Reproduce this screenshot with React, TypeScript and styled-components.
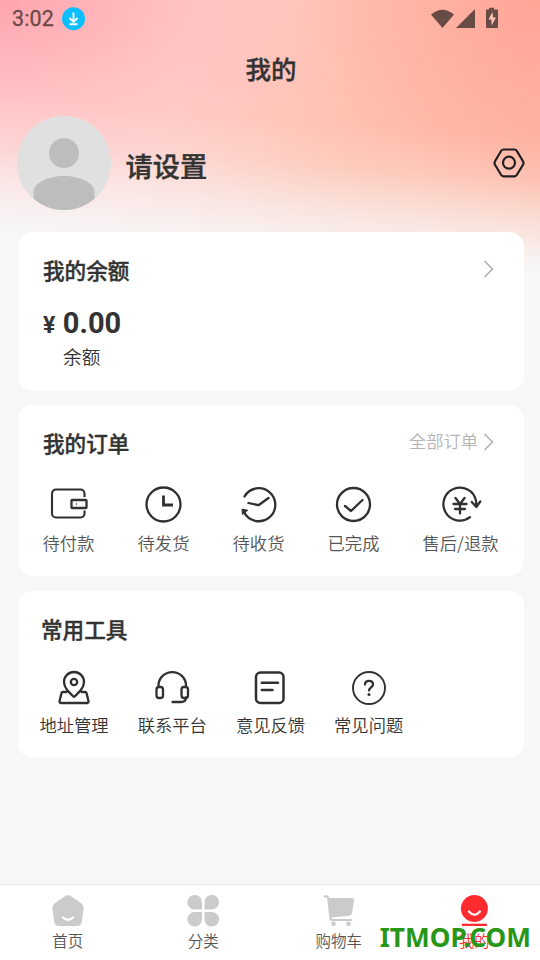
import React from 'react';
import styled, { createGlobalStyle } from 'styled-components';

const GlobalStyle = createGlobalStyle`
  * { box-sizing: border-box; }
  body {
    margin: 0;
    background: #f7f7f7;
    font-family: "Noto Sans CJK SC", sans-serif;
    color: #333;
  }
`;

const Screen = styled.div`
  display: flex;
  flex-direction: column;
  width: 540px;
  height: 960px;
  overflow: hidden;
  background:
    linear-gradient(184deg, rgba(247, 247, 247, 0) 135px, rgba(247, 247, 247, 0.2) 180px, rgba(247, 247, 247, 0.65) 225px, #f7f7f7 270px),
    radial-gradient(ellipse 360px 190px at 0 0, rgba(255, 160, 172, 0.9), rgba(255, 180, 186, 0.4) 55%, rgba(255, 190, 190, 0) 100%),
    radial-gradient(ellipse 240px 200px at 100% 0, rgba(255, 155, 142, 0.65), rgba(255, 165, 150, 0) 100%),
    linear-gradient(103deg, #ffd0d0 0, #ffcfc9 190px, #ffc1b0 370px, #ffb5a1 600px);
`;

const StatusBar = styled.header`
  display: flex;
  justify-content: space-between;
  align-items: center;
  flex: none;
  height: 37px;
  padding: 0 41px 0 12px;
`;

const StatusGroup = styled.div<{ $gap: number }>`
  display: flex;
  align-items: center;
  gap: ${(p) => p.$gap}px;
`;

const Clock = styled.span`
  font: 400 21.5px/37px Roboto, sans-serif;
  letter-spacing: 0.1px;
  color: #6b4a48;
  -webkit-text-stroke: 0.3px #6b4a48;
`;

const Title = styled.h1`
  flex: none;
  height: 64px;
  margin: 0;
  padding-left: 2px;
  text-align: center;
  font-size: 25.5px;
  font-weight: 500;
  line-height: 62px;
  -webkit-text-stroke: 0.35px #333;
`;

const Profile = styled.section`
  display: flex;
  flex: none;
  align-items: center;
  height: 131px;
  padding: 0 15px 7px 17px;
`;

const UserName = styled.div`
  flex: 1;
  margin-left: 14.500px;
  padding-top: 3px;
  font-size: 27.2px;
  font-weight: 500;
  line-height: 36px;
  -webkit-text-stroke: 0.4px #333;
`;

const Card = styled.section<{ $height: number; $gap: number }>`
  flex: none;
  height: ${(p) => p.$height}px;
  margin: 0 16px ${(p) => p.$gap}px 18px;
  border-radius: 15px;
  background: #fff;
`;

const CardHead = styled.div<{ $left: number }>`
  display: flex;
  align-items: center;
  justify-content: space-between;
  height: 76px;
  padding: 0 30px 0 ${(p) => p.$left}px;
`;

const CardTitle = styled.h2`
  margin: 0;
  padding-bottom: 1px;
  font-size: 21.6px;
  font-weight: 500;
  line-height: 30px;
  -webkit-text-stroke: 0.4px #333;
`;

const More = styled.div`
  display: flex;
  align-items: center;
  gap: 5px;
  padding-bottom: 3px;
  color: #b4b4b4;
  font-size: 17.3px;
  font-weight: 350;
  line-height: 24px;
`;

const MoreText = styled.span`
  padding-bottom: 1px;
`;

const Amount = styled.div`
  display: flex;
  align-items: baseline;
  gap: 7.500px;
  height: 35px;
  padding-left: 25px;
  font: 700 29px/30px Roboto, sans-serif;
`;

const Currency = styled.span`
  font-size: 23px;
`;

const AmountLabel = styled.div`
  padding-left: 45px;
  font-size: 18.7px;
  font-weight: 350;
  line-height: 26px;
`;

const Grid = styled.div<{ $columns: string; $left: number; $color: string }>`
  display: grid;
  grid-template-columns: ${(p) => p.$columns};
  padding-left: ${(p) => p.$left}px;
  color: ${(p) => p.$color};
`;

const Entry = styled.div<{ $top: number; $gap: number }>`
  display: flex;
  flex-direction: column;
  align-items: center;
  gap: ${(p) => p.$gap}px;
  padding-top: ${(p) => p.$top}px;
  font-size: 17.3px;
  font-weight: 350;
  line-height: 26px;
  white-space: nowrap;
`;

const EntryIcon = styled.svg`
  display: block;
  width: 42px;
  height: 42px;
  fill: none;
  stroke: #303030;
  stroke-width: 2.3;
  stroke-linecap: round;
  stroke-linejoin: round;
`;

const Spacer = styled.div`
  flex: 1;
`;

const TabBar = styled.nav`
  position: relative;
  display: grid;
  grid-template-columns: repeat(4, 135.500px);
  flex: none;
  height: 76px;
  border-top: 1px solid #e6e6e6;
  background: #fff;
`;

const Tab = styled.div<{ $active?: boolean }>`
  display: flex;
  flex-direction: column;
  align-items: center;
  padding-top: 8px;
  color: ${(p) => (p.$active ? '#ff2c2f' : '#555')};
  font-size: 15.5px;
  font-weight: 350;
  line-height: 22px;
`;

const TabIcon = styled.svg`
  display: block;
  width: 36px;
  height: 36px;
`;

const Watermark = styled.div`
  position: absolute;
  right: 9px;
  top: 34px;
  color: #289617;
  font: 700 26.2px/36px "Noto Sans", sans-serif;
  white-space: nowrap;
`;

const Chevron = () => (
  <svg width="11" height="18" viewBox="0 0 11 18" fill="none" stroke="#adadad" strokeWidth="1.5">
    <path d="M1.5 1 9.5 9 1.5 17" />
  </svg>
);

const orders = [
  {
    label: '待付款',
    icon: (
      <>
        <path d="M36.5 14V10.5a4 4 0 0 0-4-4H8a4 4 0 0 0-4 4v20a4 4 0 0 0 4 4h24.5a4 4 0 0 0 4-4V27.500" strokeWidth="2.1" strokeLinecap="butt" />
        <rect x="23.5" y="17" width="15" height="8" rx="0.8" />
        <circle cx="28.5" cy="21" r=".8" fill="#303030" stroke="none" />
      </>
    ),
  },
  {
    label: '待发货',
    icon: (
      <>
        <circle cx="20.5" cy="21.5" r="17" />
        <path d="M20.5 12.500v9.500h9.500" strokeLinecap="butt" strokeLinejoin="miter" strokeWidth="2.8" />
      </>
    ),
  },
  {
    label: '待收货',
    icon: (
      <>
        <path d="M6.500 13.500A16.5 16.5 0 1 1 6 29" />
        <path d="m10.5 20 10 2.200L30.500 15" />
        <path d="m4 26.500.5 5 5-4Z" fill="#303030" strokeWidth="1" />
      </>
    ),
  },
  {
    label: '已完成',
    icon: (
      <>
        <circle cx="20.5" cy="21.5" r="16.5" />
        <path d="m12 23 6 5L29.500 17" />
      </>
    ),
  },
  {
    label: '售后/退款',
    icon: (
      <>
        <path d="M30 34.200A16.500 16.500 0 1 1 36 17.500l.3 5.500M31.800 19l4.500 5 4-5.500" />
        <path d="m15.500 15 4.500 6 4.500-6M13.500 21h13M15 26h10M20 21v9.500" />
      </>
    ),
  },
];

const tools = [
  {
    label: '地址管理',
    icon: (
      <>
        <path d="M21 30c-5-4.500-10-9-10-15a10 10 0 0 1 20 0c0 6-5 10.500-10 15Z" />
        <circle cx="21" cy="15" r="3.2" />
        <path d="M13.500 25H10a1.500 1.500 0 0 0-1.500 1L6.500 34.300a1.500 1.500 0 0 0 1.500 1.700h26a1.500 1.500 0 0 0 1.500-1.700L33.500 26a1.500 1.500 0 0 0-1.500-1H28.500" />
      </>
    ),
  },
  {
    label: '联系平台',
    icon: (
      <>
        <path d="M7.500 20v-2.500a13.800 13.500 0 0 1 27.500 0V20M35 30.500c0 3-2 4.500-5 4.500H21.500" />
        <rect x="5.500" y="20" width="6.500" height="11" rx="2.500" />
        <rect x="30.500" y="20" width="6.500" height="11" rx="2.500" />
      </>
    ),
  },
  {
    label: '意见反馈',
    icon: (
      <>
        <rect x="7" y="5.500" width="27.500" height="30.500" rx="4.500" strokeWidth="2.500" />
        <path d="M12.800 15.800H29M12.800 22.900H23.500" strokeWidth="2.500" />
      </>
    ),
  },
  {
    label: '常见问题',
    icon: (
      <>
        <circle cx="21" cy="21" r="16" strokeWidth="1.9" />
        <path d="M17 17.500c0-5 8-4.500 8 0 0 2.800-4 3-4 6" />
        <circle cx="21" cy="27.500" r="1.500" fill="#303030" stroke="none" />
      </>
    ),
  },
];

const tabs = [
  {
    label: '首页',
    icon: (
      <>
        <path d="M14.500 3.500q3.500-2.500 7 0l9.500 6.500q3 2 2.500 6l-1.500 12q-.700 5-5.500 5H9.500Q4.700 33 4 28L2.500 16q-.500-4 2.500-6Z" fill="#cbcbcb" />
        <path d="M13 24.500q5 4.500 10 0" stroke="#fff" strokeWidth="2.200" fill="none" strokeLinecap="round" />
      </>
    ),
  },
  {
    label: '分类',
    icon: (
      <g fill="#cbcbcb">
        <path d="M17 16.500H9.500a7.300 7.300 0 1 1 7.500-7.200Z" />
        <path d="M19.500 16.500V9.300a7.300 7.300 0 1 1 7.300 7.200Z" />
        <path d="M17 19v7.200A7.300 7.300 0 1 1 9.500 19Z" />
        <path d="M19.500 19h7.300a7.300 7.300 0 1 1-7.300 7.200Z" />
      </g>
    ),
  },
  {
    label: '购物车',
    icon: (
      <>
        <path d="M7 5h23.500q3 0 2.500 3L31 20q-.400 2.500-3 2.800L10 24.500Z" fill="#cbcbcb" />
        <path d="M3.500 3.300h1.500q2 0 2.300 2L9.500 25q.300 2 2.500 2H30.500" fill="none" stroke="#cbcbcb" strokeWidth="2.200" strokeLinecap="round" />
        <circle cx="12.500" cy="30.800" r="2.300" fill="#cbcbcb" />
        <circle cx="27.500" cy="30.800" r="2.300" fill="#cbcbcb" />
      </>
    ),
  },
  {
    label: '我的',
    active: true,
    icon: (
      <>
        <circle cx="18.400" cy="15.500" r="13.500" fill="#ff2c2f" />
        <path d="M12.900 18.500q5.500 6.500 11 0" stroke="#fff" strokeWidth="2.200" fill="none" strokeLinecap="round" />
        <rect x="5.900" y="30.700" width="25" height="2.300" fill="#ff2c2f" />
      </>
    ),
  },
];

export default function App() {
  return (
    <>
      <GlobalStyle />
      <Screen>
        <StatusBar>
          <StatusGroup $gap={8}>
            <Clock>3:02</Clock>
            <svg width="24" height="24" viewBox="0 0 24 24">
              <circle cx="11.500" cy="11.700" r="11.500" fill="#0abeff" />
              <path d="M11.500 5.500v9M7.500 11l4 4 4-4M7.500 17.300h8" stroke="#fff" strokeWidth="1.900" fill="none" />
            </svg>
          </StatusGroup>
          <StatusGroup $gap={0}>
            <svg width="69" height="24" viewBox="0 0 69 24" fill="#694b45">
              <path d="M1 7.500Q12.500-2 24 7.500L12.500 21Z" />
              <path d="M26 21 45 2v19Z" />
              <path d="M56 2.500h3V.800h5v1.700h3q1 0 1 1V20q0 1-1 1H57q-1 0-1-1Z" />
              <path d="M62.500 5 58.500 12.500h3v6l4.500-8h-3Z" fill="#ffc5b6" />
            </svg>
          </StatusGroup>
        </StatusBar>
        <Title>我的</Title>
        <Profile>
          <svg width="94" height="94" viewBox="0 0 94 94">
            <defs>
              <clipPath id="avatar"><circle cx="47" cy="47" r="47" /></clipPath>
            </defs>
            <g clipPath="url(#avatar)">
              <rect width="94" height="94" fill="#e0e0e0" />
              <circle cx="47" cy="37" r="15" fill="#bdbdbd" />
              <path d="M16.500 94V76c0-9 14.500-16 30.500-16s30.500 7 30.500 16v18Z" fill="#bdbdbd" />
            </g>
          </svg>
          <UserName>请设置</UserName>
          <svg width="32" height="30" viewBox="0 0 32 30" fill="none" stroke="#202020" strokeWidth="2.200" strokeLinejoin="round">
            <path d="M10.500 1.500h11q1.500 0 2.300 1.300l6.200 10.500q1 1.700 0 3.400L23.800 27q-.800 1.300-2.300 1.300h-11Q9 28.300 8.200 27L2 16.700q-1-1.700 0-3.400L8.200 2.800Q9 1.500 10.500 1.500Z" />
            <circle cx="16" cy="14.700" r="6" />
          </svg>
        </Profile>
        <Card $height={159} $gap={14}>
          <CardHead $left={25}>
            <CardTitle>我的余额</CardTitle>
            <More><Chevron /></More>
          </CardHead>
          <Amount><Currency>¥</Currency>0.00</Amount>
          <AmountLabel>余额</AmountLabel>
        </Card>
        <Card $height={171} $gap={15}>
          <CardHead $left={25}>
            <CardTitle>我的订单</CardTitle>
            <More><MoreText>全部订单</MoreText><Chevron /></More>
          </CardHead>
          <Grid $columns="95px 95px 95px 95px 119px" $left={3} $color="#555">
            {orders.map((o) => (
              <Entry key={o.label} $top={2} $gap={5}>
                <EntryIcon viewBox="0 0 42 42">{o.icon}</EntryIcon>
                {o.label}
              </Entry>
            ))}
          </Grid>
        </Card>
        <Card $height={167} $gap={0}>
          <CardHead $left={23}>
            <CardTitle>常用工具</CardTitle>
          </CardHead>
          <Grid $columns="repeat(4, 98.200px)" $left={7} $color="#333">
            {tools.map((t) => (
              <Entry key={t.label} $top={0} $gap={3}>
                <EntryIcon viewBox="0 0 42 42">{t.icon}</EntryIcon>
                {t.label}
              </Entry>
            ))}
          </Grid>
        </Card>
        <Spacer />
        <TabBar>
          {tabs.map((t) => (
            <Tab key={t.label} $active={t.active}>
              <TabIcon viewBox="0 0 36 36">{t.icon}</TabIcon>
              {t.label}
            </Tab>
          ))}
          <Watermark>ITMOP.COM</Watermark>
        </TabBar>
      </Screen>
    </>
  );
}
